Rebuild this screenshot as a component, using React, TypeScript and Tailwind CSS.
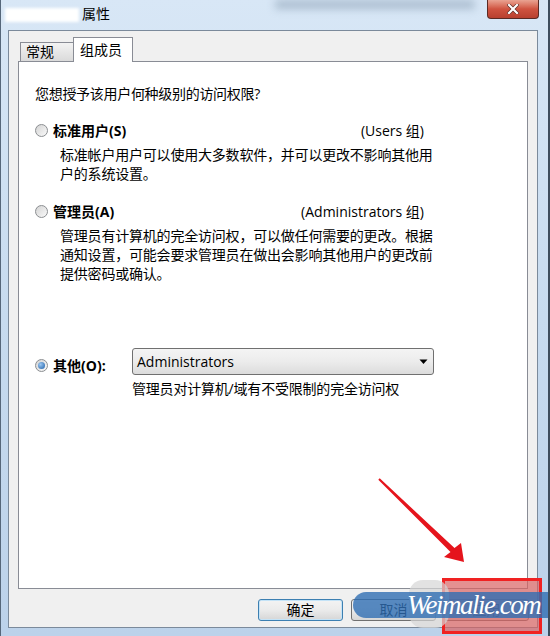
import React from "react";

function Radio({ checked }: { checked?: boolean }) {
  return (
    <span className="w-[13px] h-[13px] rounded-full border border-[#8b8e91] bg-gradient-to-br from-[#d4d4d4] to-[#fafafa] flex items-center justify-center shrink-0">
      {checked && (
        <span className="w-[7px] h-[7px] rounded-full bg-[radial-gradient(circle_at_35%_35%,#9cc8f2,#1e5ea6)]" />
      )}
    </span>
  );
}

function Button({ label, primary }: { label: string; primary?: boolean }) {
  return (
    <div
      className={
        "w-[85px] h-[22px] rounded-[3px] border flex items-center justify-center bg-gradient-to-b from-[#f3f3f3] via-[#ebebeb] to-[#d6d6d6] leading-[20px] " +
        (primary
          ? "border-[#3c7fb1] shadow-[inset_0_0_0_1px_#c4e3f7]"
          : "border-[#707070]")
      }
    >
      {label}
    </div>
  );
}

export default function App() {
  return (
    <div className="relative w-[550px] h-[636px] overflow-hidden flex flex-col bg-gradient-to-b from-[#d8e7f6] via-[#c7dbef] to-[#bcd2ea] border-l border-l-[#56677a] border-r-2 border-r-[#3e4d5d] font-['Open_Sans','Noto_Sans_CJK_SC',sans-serif] text-[14px] text-black">
      {/* title bar */}
      <div className="h-[30px] shrink-0 flex items-start">
        <div className="ml-[4px] mt-[8px] w-[74px] h-[14px] bg-white blur-[1.5px]" />
        <span className="ml-[3px] mt-[5px] leading-[18px]">属性</span>
        <div className="ml-[165px] w-[200px] h-[9px] bg-[#7d92a8] opacity-50 blur-[4px]" />
        <div className="ml-auto mr-[9px] w-[52px] h-[19px] rounded-b-[4px] border border-t-0 border-[#5a2a24] bg-gradient-to-b from-[#e9a392] via-[#cf5340] to-[#b8402f] flex items-center justify-center">
          <svg width="12" height="10" viewBox="0 0 12 10">
            <path d="M2 1 L10 9 M10 1 L2 9" stroke="#5a2a24" strokeWidth="3.4" strokeLinecap="square" />
            <path d="M2 1 L10 9 M10 1 L2 9" stroke="#ffffff" strokeWidth="2.2" strokeLinecap="square" />
          </svg>
        </div>
      </div>

      {/* dialog body */}
      <div className="flex-1 ml-[7px] mr-[10px] mb-[8px] border border-[#7b8a9b] bg-[#f0f0f0] flex flex-col">
        {/* tabs */}
        <div className="h-[30px] flex items-end pl-[11px]">
          <div className="w-[54px] h-[19px] border border-b-0 border-[#898c95] bg-gradient-to-b from-[#f3f3f3] to-[#dadada] pl-[5px] leading-[18px]">
            常规
          </div>
          <div className="relative z-10 -ml-px -mb-px w-[60px] h-[25px] border border-b-0 border-[#898c95] bg-white pl-[6px] pt-[2px] leading-[19px]">
            组成员
          </div>
        </div>

        {/* tab page */}
        <div className="mx-[9px] h-[528px] border border-[#898c95] bg-white pl-[16px] pt-[22px] leading-[19px]">
          <div className="tracking-[-0.3px]">您想授予该用户何种级别的访问权限?</div>

          <div className="mt-[18px] w-[389px] flex items-center justify-between">
            <div className="flex items-center gap-[5px]">
              <Radio />
              <span className="font-bold">标准用户(S)</span>
            </div>
            <span>(Users 组)</span>
          </div>
          <div className="mt-[5px] pl-[25px] whitespace-nowrap tracking-[-0.2px]">
            <div>标准帐户用户可以使用大多数软件，并可以更改不影响其他用</div>
            <div>户的系统设置。</div>
          </div>

          <div className="mt-[19px] w-[389px] flex items-center justify-between">
            <div className="flex items-center gap-[5px]">
              <Radio />
              <span className="font-bold">管理员(A)</span>
            </div>
            <span>(Administrators 组)</span>
          </div>
          <div className="mt-[5px] pl-[25px] whitespace-nowrap tracking-[-0.2px]">
            <div>管理员有计算机的完全访问权，可以做任何需要的更改。根据</div>
            <div>通知设置，可能会要求管理员在做出会影响其他用户的更改前</div>
            <div>提供密码或确认。</div>
          </div>

          <div className="mt-[65px] flex items-start">
            <div className="mt-[8px] flex items-center gap-[5px]">
              <Radio checked />
              <span className="w-[79px] font-bold">其他(O):</span>
            </div>
            <div className="w-[302px] h-[27px] rounded-[3px] border border-[#707070] bg-gradient-to-b from-[#f4f4f4] via-[#ececec] to-[#dcdcdc] flex items-center justify-between pl-[4px] pr-[5px]">
              <span>Administrators</span>
              <svg width="9" height="6" viewBox="0 0 9 6">
                <path d="M0.5 0.5 L8.5 0.5 L4.5 5 Z" fill="#000" />
              </svg>
            </div>
          </div>
          <div className="mt-[4px] pl-[97px] tracking-[-0.2px]">管理员对计算机/域有不受限制的完全访问权</div>
        </div>

        {/* buttons */}
        <div className="mt-[10px] flex justify-end gap-[8px] pr-[8px]">
          <Button label="确定" primary />
          <Button label="取消" />
          <Button label="应用" />
        </div>
      </div>

      {/* red arrow */}
      <svg className="absolute left-0 top-0 pointer-events-none" width="550" height="636" viewBox="0 0 550 636">
        <polygon
          points="377.3,479.7 449.5,552 443,557 463,562 460,543 453.5,548 378.7,478.3"
          fill="#e5141c"
        />
      </svg>

      {/* highlight box */}
      <div className="absolute left-[441px] top-[578px] w-[100px] h-[56px] border-[3px] border-[#f02222] bg-[#d86262]/70" />

      {/* watermark */}
      <div className="absolute left-[408px] top-[580px] w-[40px] h-[48px] rounded-[14px] bg-[#d6d6d6]/70" />
      <div className="absolute left-[352px] top-[592px] w-[230px] h-[26px] rounded-full bg-[#2f6eb3]/80 flex items-center pl-[54px]">
        <span className="font-['Liberation_Serif',serif] italic text-[27px] leading-none text-white tracking-[-1.5px]">
          Weimalie.com
        </span>
      </div>
    </div>
  );
}
